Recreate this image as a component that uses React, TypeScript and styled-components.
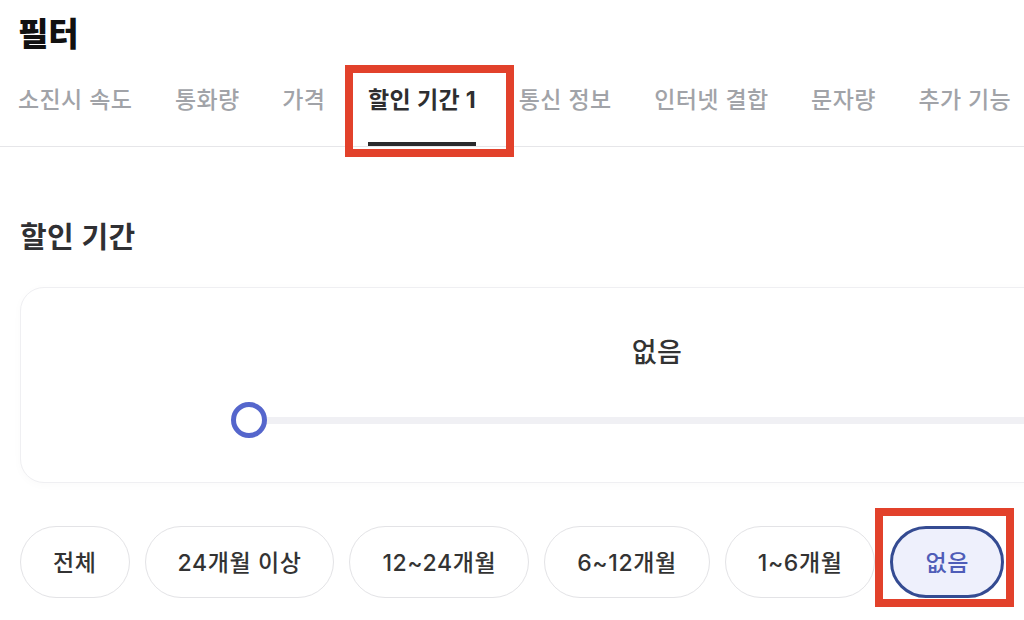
import React, { FC, useState } from 'react';
import styled, { createGlobalStyle } from 'styled-components';

const GlobalStyle = createGlobalStyle`
    html, body {
        margin: 0;
        padding: 0;
        background: #fff;
        overflow: hidden;
    }
    body {
        width: 1024px;
        height: 620px;
        font-family: Inter, 'Noto Sans CJK KR', 'Noto Sans', sans-serif;
        color: #222;
    }
    * {
        box-sizing: border-box;
    }
`;

const Page = styled.div`
    padding: 0 0 0 20px;
    width: 1024px;
`;

const Title = styled.h1`
    margin: 0 0 0 -2px;
    padding-top: 14px;
    font-size: 33px;
    line-height: 40px;
    font-weight: 800;
    color: #111;
`;

const TabBar = styled.nav`
    display: flex;
    gap: 42.6px;
    margin-left: -20px;
    padding-left: 18px;
    border-bottom: 1px solid #e6e6e9;
    white-space: nowrap;
`;

const Tab = styled.div<{ $active?: boolean }>`
    position: relative;
    display: flex;
    flex-direction: column;
    padding-top: 31px;
    font-size: 23px;
    line-height: 30px;
    font-weight: ${(p) => (p.$active ? 700 : 500)};
    color: ${(p) => (p.$active ? '#2e2e30' : '#a1a3a8')};
    letter-spacing: 0.4px;
`;

const Underline = styled.span<{ $active?: boolean }>`
    display: block;
    height: 4px;
    margin-top: 27px;
    background: ${(p) => (p.$active ? '#2a2a2c' : 'transparent')};
`;

// red annotation frame drawn over the screenshot
const Highlight = styled.span<{ $t: number; $r: number; $b: number; $l: number }>`
    position: absolute;
    top: ${(p) => p.$t}px;
    right: ${(p) => p.$r}px;
    bottom: ${(p) => p.$b}px;
    left: ${(p) => p.$l}px;
    border: 8px solid #e2412b;
    pointer-events: none;
`;

const SectionTitle = styled.h2`
    margin: 74px 0 0;
    font-size: 29px;
    line-height: 34px;
    font-weight: 700;
    color: #303033;
    letter-spacing: 0.4px;
`;

const Card = styled.div`
    margin-top: 32px;
    width: 1274px;
    padding: 49px 0 44px;
    border: 1px solid #efeff2;
    border-radius: 24px;
    background: #fff;
    box-shadow: 0 2px 10px rgba(0, 0, 0, 0.025);
    display: flex;
    flex-direction: column;
    align-items: center;
`;

const ValueLabel = styled.div`
    font-size: 27px;
    line-height: 32px;
    font-weight: 500;
    color: #333;
    letter-spacing: 0.5px;
`;

const Slider = styled.div`
    position: relative;
    align-self: stretch;
    margin: 33px 210px 0;
    height: 36px;
    display: flex;
    align-items: center;
`;

const Track = styled.div`
    flex: 1;
    height: 7px;
    margin: 0 18px;
    border-radius: 4px;
    background: #f0f0f4;
`;

const Thumb = styled.span`
    position: absolute;
    left: 0;
    top: 0;
    width: 36px;
    height: 36px;
    border-radius: 50%;
    border: 5px solid #5566cc;
    background: #fff;
`;

const ChipRow = styled.div`
    display: flex;
    gap: 15px;
    margin-top: 43px;
    white-space: nowrap;
`;

const Chip = styled.button<{ $selected?: boolean }>`
    position: relative;
    height: 72px;
    padding: 0 ${(p) => (p.$selected ? 32 : 32)}px;
    border-radius: 36px;
    border: ${(p) => (p.$selected ? '3px solid #344b92' : '1.5px solid #e3e3e6')};
    background: ${(p) => (p.$selected ? '#eef0fc' : '#fff')};
    color: ${(p) => (p.$selected ? '#4f5db8' : '#333')};
    font-family: inherit;
    font-size: 23px;
    font-weight: 500;
    letter-spacing: 0.6px;
    padding-bottom: 2px;
    cursor: pointer;
`;

const tabs = ['소진시 속도', '통화량', '가격', '할인 기간 1', '통신 정보', '인터넷 결합', '문자량', '추가 기능'];
const periods = ['전체', '24개월 이상', '12~24개월', '6~12개월', '1~6개월', '없음'];

const App: FC = () => {
    const [activeTab] = useState(3);
    const [period, setPeriod] = useState(5);

    return (
        <Page>
            <GlobalStyle />
            <Title>필터</Title>
            <TabBar>
                {tabs.map((t, i) => (
                    <Tab key={t} $active={i === activeTab}>
                        {t}
                        <Underline $active={i === activeTab} />
                        {i === activeTab && <Highlight $t={11} $r={-38} $b={-11} $l={-23} />}
                    </Tab>
                ))}
            </TabBar>

            <SectionTitle>할인 기간</SectionTitle>
            <Card>
                <ValueLabel>{periods[period]}</ValueLabel>
                <Slider>
                    <Track />
                    <Thumb />
                </Slider>
            </Card>

            <ChipRow>
                {periods.map((p, i) => (
                    <Chip key={p} $selected={i === period} onClick={() => setPeriod(i)}>
                        {p}
                        {i === period && <Highlight $t={-21} $r={-13} $b={-12} $l={-18} />}
                    </Chip>
                ))}
            </ChipRow>
        </Page>
    );
};

export default App;
